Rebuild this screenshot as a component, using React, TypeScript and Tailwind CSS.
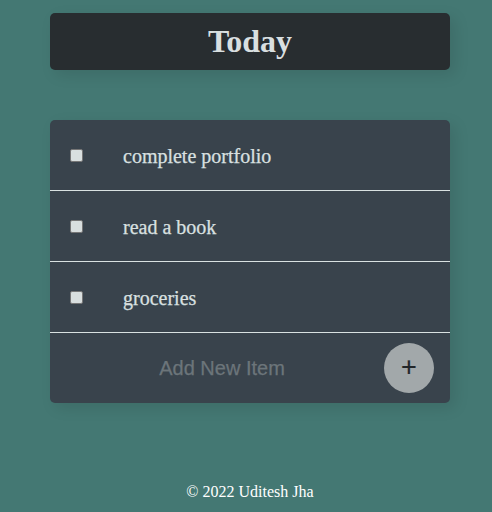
const serif = "font-['Liberation_Serif','Times_New_Roman',serif]";
const sans = "font-['Liberation_Sans',Arial,sans-serif]";
const shadow = "shadow-[5px_5px_15px_0px_rgba(0,0,0,0.1)]";

const items = ["complete portfolio", "read a book", "groceries"];

function Item({ text }: { text: string }) {
  return (
    <label className="flex h-[71px] items-center border-b border-[#d9e2e1] pl-5">
      <input
        type="checkbox"
        className="size-[13px] appearance-none rounded-[2px] border border-[#767676] bg-[#d9dfdf]"
      />
      <span className="ml-10 pt-0.5 text-[20px] leading-[23px] text-[#d9e0e0] [-webkit-text-stroke:0.25px_#d9e0e0]">
        {text}
      </span>
    </label>
  );
}

export default function App() {
  return (
    <div className={`flex h-[512px] flex-col bg-[#447873] pl-[50px] pt-[13px] ${serif}`}>
      <header
        className={`flex h-[57px] w-[400px] items-center justify-center rounded-[5px] bg-[#282d30] ${shadow}`}
      >
        <h1 className="text-[32px] font-bold leading-[37px] text-[#d9dfe0]">Today</h1>
      </header>
      <main className={`mt-[50px] h-[283px] w-[400px] rounded-[5px] bg-[#39434c] ${shadow}`}>
        {items.map((text) => (
          <Item key={text} text={text} />
        ))}
        <form className="flex h-[70px] items-center pr-4">
          <input
            type="text"
            placeholder="Add New Item"
            className={`h-[60px] min-w-0 flex-1 bg-transparent pl-2.5 text-center text-[20px] text-[#d9dfdf] outline-none [-webkit-text-stroke:0.25px_#6c757a] placeholder:text-[#6c757a] placeholder:opacity-100 ${sans}`}
          />
          <button
            type="button"
            className={`size-[50px] rounded-full bg-[#a2a8aa] pb-0.5 text-[27px] leading-[48px] text-[#222629] [-webkit-text-stroke:0.2px_#222629] ${sans}`}
          >
            +
          </button>
        </form>
      </main>
      <footer className="mt-20 w-[400px] text-center text-[16px] leading-[18px] text-white">
        © 2022 Uditesh Jha
      </footer>
    </div>
  );
}
